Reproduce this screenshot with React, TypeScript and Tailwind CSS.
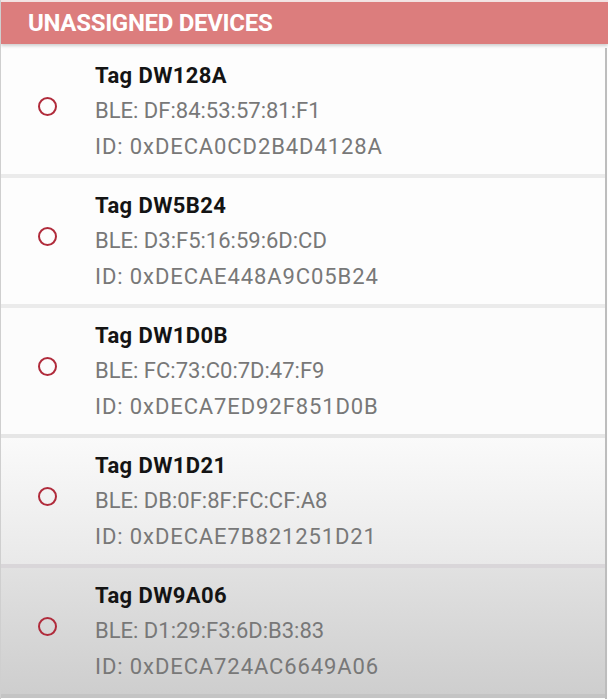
import React from "react";

const devices = [
  { name: "Tag DW128A", ble: "DF:84:53:57:81:F1", id: "0xDECA0CD2B4D4128A", bg: "bg-[#fdfdfd]" },
  { name: "Tag DW5B24", ble: "D3:F5:16:59:6D:CD", id: "0xDECAE448A9C05B24", bg: "bg-[#fdfdfd]" },
  { name: "Tag DW1D0B", ble: "FC:73:C0:7D:47:F9", id: "0xDECA7ED92F851D0B", bg: "bg-[#fcfcfc]" },
  { name: "Tag DW1D21", ble: "DB:0F:8F:FC:CF:A8", id: "0xDECAE7B821251D21", bg: "bg-gradient-to-b from-[#fafafa] to-[#e9e9e9]" },
  { name: "Tag DW9A06", ble: "D1:29:F3:6D:B3:83", id: "0xDECA724AC6649A06", bg: "bg-gradient-to-b from-[#e1e1e1] to-[#cecece]" },
];

const seps = ["bg-[#ebebeb]", "bg-[#ebebeb]", "bg-[#e6e6e6]", "bg-[#d9d6d9]", "bg-[#c4c4c4]"];

export default function App() {
  return (
    <div
      className="w-[608px] h-[699px] overflow-hidden bg-[#fdfdfd] flex flex-col border-l border-[#cfcfcf]"
      style={{ fontFamily: "Roboto, 'Liberation Sans', sans-serif" }}
    >
      <div className="h-[2px] bg-[#f3e4e4]" />
      <div className="h-[42px] bg-[#dc7d7d] flex items-center pl-[27px] shadow-[0_2px_3px_rgba(0,0,0,0.18)] z-10">
        <span className="text-white font-bold text-[24px] tracking-[-0.3px] leading-none">
          UNASSIGNED DEVICES
        </span>
      </div>
      <div className="h-[4px]" />
      <div className="flex flex-col border-r-2 border-[#bdbdbd] flex-1 mr-[1px]">
        {devices.map((d, i) => (
          <div key={d.id} className="flex flex-col">
            <div className={`h-[126px] flex items-start ${d.bg}`}>
              <div className="w-[94px] flex justify-start pl-[37px] pt-[49px]">
                <div className="w-[19px] h-[19px] rounded-full border-[2.5px] border-[#b02b3b]" />
              </div>
              <div className="flex flex-col pt-[16px]">
                <div className="text-[22px] font-bold text-[#141414] leading-[24px] tracking-[0.4px]">{d.name}</div>
                <div className="text-[22px] text-[#787878] leading-[24px] mt-[11px] tracking-[0px]">BLE: {d.ble}</div>
                <div className="text-[22px] text-[#787878] leading-[24px] mt-[12px] tracking-[0.9px]">ID: {d.id}</div>
              </div>
            </div>
            <div className={`h-[4px] ${seps[i]}`} />
          </div>
        ))}
      </div>
    </div>
  );
}
